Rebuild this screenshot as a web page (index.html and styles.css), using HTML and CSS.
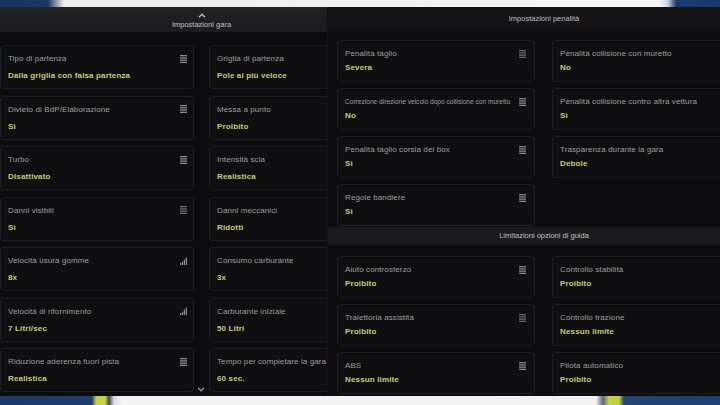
FILE: index.html
```html
<!DOCTYPE html>
<html lang="it">
<head>
<meta charset="utf-8">
<title>Impostazioni gara</title>
<link rel="stylesheet" href="styles.css">
</head>
<body>
<div class="screen">
  <div class="strip strip-top"></div>
  <main class="panels">
    <section class="panel panel-race">
      <div class="race-inner">
        <header class="race-head">
          <svg class="chev" width="8" height="5" viewBox="0 0 8 5"><path d="M1 4.2 L4 1.2 L7 4.2" fill="none" stroke="#bdbdbd" stroke-width="1.3"/></svg>
          <span>Impostazioni gara</span>
        </header>
        <div class="grid race-grid">
          <div class="card"><div class="row"><span class="label">Tipo di partenza</span><svg class="ico" width="7" height="8" viewBox="0 0 7 8"><path d="M0 .5H7M0 2.25H7M0 4H7M0 5.75H7M0 7.5H7" stroke="#8c8c8c" stroke-width="1"/></svg></div><div class="value">Dalla griglia con falsa partenza</div></div>
          <div class="card"><div class="row"><span class="label">Griglia di partenza</span></div><div class="value">Pole al più veloce</div></div>
          <div class="card"><div class="row"><span class="label">Divieto di BdP/Elaborazione</span><svg class="ico" width="7" height="8" viewBox="0 0 7 8"><path d="M0 .5H7M0 2.25H7M0 4H7M0 5.75H7M0 7.5H7" stroke="#8c8c8c" stroke-width="1"/></svg></div><div class="value">Sì</div></div>
          <div class="card"><div class="row"><span class="label">Messa a punto</span></div><div class="value">Proibito</div></div>
          <div class="card"><div class="row"><span class="label">Turbo</span><svg class="ico" width="7" height="8" viewBox="0 0 7 8"><path d="M0 .5H7M0 2.25H7M0 4H7M0 5.75H7M0 7.5H7" stroke="#8c8c8c" stroke-width="1"/></svg></div><div class="value">Disattivato</div></div>
          <div class="card"><div class="row"><span class="label">Intensità scia</span></div><div class="value">Realistica</div></div>
          <div class="card"><div class="row"><span class="label">Danni visibili</span><svg class="ico" width="7" height="8" viewBox="0 0 7 8"><path d="M0 .5H7M0 2.25H7M0 4H7M0 5.75H7M0 7.5H7" stroke="#6c6c6c" stroke-width="1"/></svg></div><div class="value">Sì</div></div>
          <div class="card"><div class="row"><span class="label">Danni meccanici</span></div><div class="value">Ridotti</div></div>
          <div class="card"><div class="row"><span class="label">Velocità usura gomme</span><svg class="ico" width="7" height="8" viewBox="0 0 7 8"><path d="M0 6h1.2v2H0zM1.9 4.5h1.2V8H1.9zM3.8 2.5H5V8H3.8zM5.7 0.5h1.3V8H5.7z" fill="#8c8c8c"/></svg></div><div class="value">8x</div></div>
          <div class="card"><div class="row"><span class="label">Consumo carburante</span></div><div class="value">3x</div></div>
          <div class="card"><div class="row"><span class="label">Velocità di rifornimento</span><svg class="ico" width="7" height="8" viewBox="0 0 7 8"><path d="M0 6h1.2v2H0zM1.9 4.5h1.2V8H1.9zM3.8 2.5H5V8H3.8zM5.7 0.5h1.3V8H5.7z" fill="#8c8c8c"/></svg></div><div class="value">7 Litri/sec</div></div>
          <div class="card"><div class="row"><span class="label">Carburante iniziale</span></div><div class="value">50 Litri</div></div>
          <div class="card"><div class="row"><span class="label">Riduzione aderenza fuori pista</span><svg class="ico" width="7" height="8" viewBox="0 0 7 8"><path d="M0 .5H7M0 2.25H7M0 4H7M0 5.75H7M0 7.5H7" stroke="#8c8c8c" stroke-width="1"/></svg></div><div class="value">Realistica</div></div>
          <div class="card"><div class="row"><span class="label">Tempo per completare la gara</span></div><div class="value">60 sec.</div></div>
        </div>
        <svg class="chev-down" width="8" height="5" viewBox="0 0 8 5"><path d="M1 .8 L4 3.8 L7 .8" fill="none" stroke="#9a9a9a" stroke-width="1.3"/></svg>
      </div>
    </section>

    <section class="panel panel-pen">
      <header class="pen-head">Impostazioni penalità</header>
      <div class="grid pen-grid">
        <div class="card card-s"><div class="row"><span class="label">Penalità taglio</span><svg class="ico" width="7" height="8" viewBox="0 0 7 8"><path d="M0 .5H7M0 2.25H7M0 4H7M0 5.75H7M0 7.5H7" stroke="#6c6c6c" stroke-width="1"/></svg></div><div class="value">Severa</div></div>
        <div class="card card-s"><div class="row"><span class="label">Penalità collisione con muretto</span></div><div class="value">No</div></div>
        <div class="card card-s"><div class="row"><span class="label label-xs">Correzione direzione veicolo dopo collisione con muretto</span><svg class="ico" width="7" height="8" viewBox="0 0 7 8"><path d="M0 .5H7M0 2.25H7M0 4H7M0 5.75H7M0 7.5H7" stroke="#8c8c8c" stroke-width="1"/></svg></div><div class="value">No</div></div>
        <div class="card card-s"><div class="row"><span class="label">Penalità collisione contro altra vettura</span></div><div class="value">Sì</div></div>
        <div class="card card-s"><div class="row"><span class="label">Penalità taglio corsia dei box</span><svg class="ico" width="7" height="8" viewBox="0 0 7 8"><path d="M0 .5H7M0 2.25H7M0 4H7M0 5.75H7M0 7.5H7" stroke="#8c8c8c" stroke-width="1"/></svg></div><div class="value">Sì</div></div>
        <div class="card card-s"><div class="row"><span class="label">Trasparenza durante la gara</span></div><div class="value">Debole</div></div>
        <div class="card card-s"><div class="row"><span class="label">Regole bandiere</span><svg class="ico" width="7" height="8" viewBox="0 0 7 8"><path d="M0 .5H7M0 2.25H7M0 4H7M0 5.75H7M0 7.5H7" stroke="#8c8c8c" stroke-width="1"/></svg></div><div class="value">Sì</div></div>
      </div>
      <div class="band">Limitazioni opzioni di guida</div>
      <div class="grid pen-grid grid-2">
        <div class="card card-s"><div class="row"><span class="label">Aiuto controsterzo</span><svg class="ico" width="7" height="8" viewBox="0 0 7 8"><path d="M0 .5H7M0 2.25H7M0 4H7M0 5.75H7M0 7.5H7" stroke="#8c8c8c" stroke-width="1"/></svg></div><div class="value">Proibito</div></div>
        <div class="card card-s"><div class="row"><span class="label">Controllo stabilità</span></div><div class="value">Proibito</div></div>
        <div class="card card-s"><div class="row"><span class="label">Traiettoria assistita</span><svg class="ico" width="7" height="8" viewBox="0 0 7 8"><path d="M0 .5H7M0 2.25H7M0 4H7M0 5.75H7M0 7.5H7" stroke="#6c6c6c" stroke-width="1"/></svg></div><div class="value">Proibito</div></div>
        <div class="card card-s"><div class="row"><span class="label">Controllo trazione</span></div><div class="value">Nessun limite</div></div>
        <div class="card card-s"><div class="row"><span class="label">ABS</span><svg class="ico" width="7" height="8" viewBox="0 0 7 8"><path d="M0 .5H7M0 2.25H7M0 4H7M0 5.75H7M0 7.5H7" stroke="#8c8c8c" stroke-width="1"/></svg></div><div class="value">Nessun limite</div></div>
        <div class="card card-s"><div class="row"><span class="label">Pilota automatico</span></div><div class="value">Proibito</div></div>
      </div>
    </section>
  </main>
  <div class="strip strip-bottom"></div>
</div>
</body>
</html>
```

FILE: styles.css
```css
* { box-sizing: border-box; }

html, body {
  margin: 0;
  padding: 0;
  width: 720px;
  height: 405px;
  overflow: hidden;
  background: #0b0b0d;
  font-family: "Liberation Sans", Arial, sans-serif;
}

.screen {
  width: 720px;
  height: 405px;
  display: flex;
  flex-direction: column;
  overflow: hidden;
}

.strip { flex: none; }

.strip-top {
  height: 7px;
  background: linear-gradient(to right,
    #1a3461 0, #1c3867 48px, #8b97ab 56px, #eeeeee 64px,
    #f6f6f6 660px, #c9d0dc 668px, #1b3c70 676px, #163a6e 720px);
}

.strip-bottom {
  height: 9px;
  background: linear-gradient(to right,
    #1c3a69 0, #1f3e6e 92px, #c3cf3e 96px, #c8d444 105px, #3c4660 109px,
    #d9dce2 114px, #f4f4f4 122px, #f2f2f2 596px, #5a6680 603px,
    #c6d13e 609px, #c3cf3f 619px, #244472 624px, #1d3e70 720px);
}

.panels {
  flex: 1;
  display: flex;
  min-height: 0;
}

.panel {
  height: 389px;
  overflow: hidden;
  flex: none;
}

/* ---------- left panel ---------- */
.panel-race {
  width: 327px;
  background: #0c0c0e;
}

.race-inner {
  width: 403px;
  height: 100%;
  position: relative;
}

.race-head {
  height: 25px;
  background: linear-gradient(to bottom, #222225, #1c1c1f);
  display: flex;
  flex-direction: column;
  align-items: center;
  justify-content: center;
  gap: 2px;
  color: #c2c2c2;
  font-size: 7.5px;
  line-height: 9px;
  padding-top: 2px;
}

.chev { display: block; }

.grid {
  display: grid;
  grid-template-columns: 194px 194px;
  column-gap: 15px;
}

.race-grid {
  margin-top: 13px;
  grid-auto-rows: 44px;
  row-gap: 6.5px;
}

.card {
  background: #0f0f11;
  border: 1px solid #1f1f22;
  border-radius: 3px;
  padding: 8px 6px 0 7px;
}

.row {
  display: flex;
  align-items: center;
  justify-content: space-between;
  height: 9px;
}

.label {
  color: #9e9e9e;
  font-size: 8px;
  line-height: 9px;
  letter-spacing: 0.1px;
  white-space: nowrap;
}

.label-xs {
  font-size: 6.6px;
  letter-spacing: 0;
}

.ico {
  flex: none;
  display: block;
}

.value {
  margin-top: 8px;
  color: #c6cc70;
  font-size: 8px;
  line-height: 10px;
  font-weight: bold;
  letter-spacing: 0.15px;
}

.chev-down {
  position: absolute;
  left: 197px;
  top: 380px;
}

/* ---------- right panel ---------- */
.panel-pen {
  width: 433px;
  background: #0c0c0e;
  border-left: 1px solid #141416;
}

.pen-head {
  height: 23px;
  background: #151517;
  color: #bcbcbc;
  font-size: 7.5px;
  line-height: 23px;
  text-align: center;
}

.pen-grid {
  grid-template-columns: 198px 198px;
  column-gap: 17px;
  grid-auto-rows: 42px;
  row-gap: 6px;
  padding-left: 9px;
  margin-top: 10px;
}

.card-s { padding-top: 8px; padding-right: 8px; }

.card-s .value { margin-top: 5px; }

.band {
  margin-top: 1px;
  height: 18px;
  background: #1b1b1e;
  color: #c0c0c0;
  font-size: 7.5px;
  line-height: 18px;
  text-align: center;
}

.grid-2 { margin-top: 11px; }
```
